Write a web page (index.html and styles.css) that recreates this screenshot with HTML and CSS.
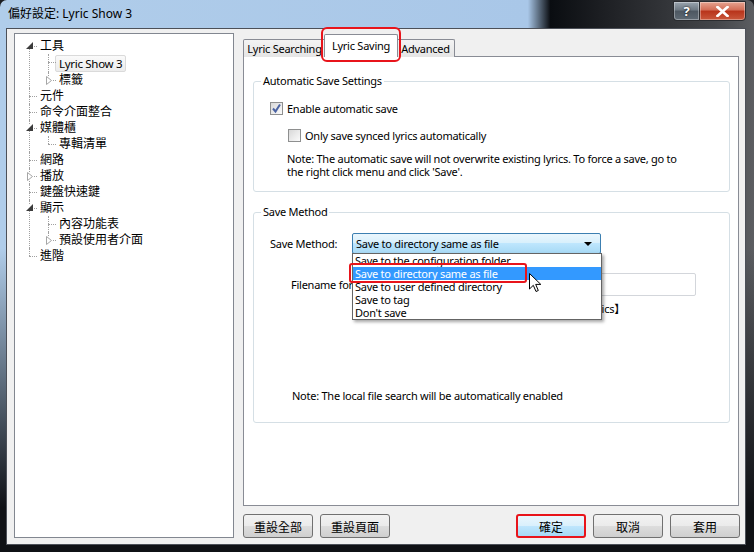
FILE: index.html
```html
<!DOCTYPE html>
<html lang="zh-TW">
<head>
  <meta charset="UTF-8">
  <title>偏好設定: Lyric Show 3</title>
  <link rel="stylesheet" href="styles.css">
</head>
<body>

  <div class="window">

    <!-- Barra de título -->
    <div class="titlebar">
      <span class="title">偏好設定: Lyric Show 3</span>
      <div class="caption-buttons">
        <span class="cap-btn help">?</span>
        <span class="cap-btn close">
          <svg width="13" height="11" viewBox="0 0 13 11"><path d="M1.5 1 L11.5 10 M11.5 1 L1.5 10" stroke="#fff" stroke-width="2.6" stroke-linecap="square"/></svg>
        </span>
      </div>
    </div>

    <div class="client">

      <!-- Árvore de categorias -->
      <div class="tree">
        <ul class="tree-root">
          <li>
            <span class="exp exp-open"><svg width="7" height="7" viewBox="0 0 7 7"><polygon points="7,0 7,7 0,7" fill="#3c3c3c"/></svg></span>
            <span class="node">工具</span>
            <ul>
              <li><span class="node selected">Lyric Show 3</span></li>
              <li>
                <span class="exp exp-closed"><svg width="6" height="9" viewBox="0 0 6 9"><polygon points="0.5,0.5 5.5,4.5 0.5,8.5" fill="#fff" stroke="#a6a6a6"/></svg></span>
                <span class="node">標籤</span>
              </li>
            </ul>
          </li>
          <li><span class="node">元件</span></li>
          <li><span class="node">命令介面整合</span></li>
          <li>
            <span class="exp exp-open"><svg width="7" height="7" viewBox="0 0 7 7"><polygon points="7,0 7,7 0,7" fill="#3c3c3c"/></svg></span>
            <span class="node">媒體櫃</span>
            <ul>
              <li><span class="node">專輯清單</span></li>
            </ul>
          </li>
          <li><span class="node">網路</span></li>
          <li>
            <span class="exp exp-closed"><svg width="6" height="9" viewBox="0 0 6 9"><polygon points="0.5,0.5 5.5,4.5 0.5,8.5" fill="#fff" stroke="#a6a6a6"/></svg></span>
            <span class="node">播放</span>
          </li>
          <li><span class="node">鍵盤快速鍵</span></li>
          <li>
            <span class="exp exp-open"><svg width="7" height="7" viewBox="0 0 7 7"><polygon points="7,0 7,7 0,7" fill="#3c3c3c"/></svg></span>
            <span class="node">顯示</span>
            <ul>
              <li><span class="node">內容功能表</span></li>
              <li>
                <span class="exp exp-closed"><svg width="6" height="9" viewBox="0 0 6 9"><polygon points="0.5,0.5 5.5,4.5 0.5,8.5" fill="#fff" stroke="#a6a6a6"/></svg></span>
                <span class="node">預設使用者介面</span>
              </li>
            </ul>
          </li>
          <li><span class="node">進階</span></li>
        </ul>
      </div>

      <!-- Área principal -->
      <div class="main">

        <div class="tabs">
          <span class="tab tab-search">Lyric Searching</span>
          <span class="tab tab-active">Lyric Saving</span>
          <span class="tab tab-advanced">Advanced</span>
        </div>

        <div class="panel">

          <fieldset class="group group-auto">
            <legend>Automatic Save Settings</legend>
            <label class="check-row">
              <span class="checkbox"><svg width="11" height="11" viewBox="0 0 11 11"><path d="M2 5.5 L4.5 8.5 L9 1.5" fill="none" stroke="#4b63a3" stroke-width="2"/></svg></span>
              Enable automatic save
            </label>
            <label class="check-row sub">
              <span class="checkbox"></span>
              Only save synced lyrics automatically
            </label>
            <p class="note">Note: The automatic save will not overwrite existing lyrics. To force a save, go to<br>the right click menu and click 'Save'.</p>
          </fieldset>

          <fieldset class="group group-method">
            <legend>Save Method</legend>

            <div class="form-row">
              <span class="label label-method">Save Method:</span>
              <div class="combo-wrap">
                <div class="combo">
                  <span>Save to directory same as file</span>
                  <svg width="8" height="4" viewBox="0 0 8 4"><polygon points="0,0 8,0 4,4" fill="#000"/></svg>
                </div>
                <!-- Lista aberta do combo -->
                <ul class="dropdown">
                  <li>Save to the configuration folder</li>
                  <li class="hl">Save to directory same as file</li>
                  <li>Save to user defined directory</li>
                  <li>Save to tag</li>
                  <li>Don't save</li>
                </ul>
                <svg class="cursor" width="13" height="20" viewBox="0 0 13 20"><path d="M0.5 0.5 L0.5 16 L4.3 12.3 L7 18.5 L9.3 17.5 L6.7 11.4 L11.8 11.4 Z" fill="#fff" stroke="#000" stroke-width="1"/></svg>
              </div>
            </div>

            <div class="form-row filename-row">
              <span class="label label-file">Filename format:</span>
              <span class="input"></span>
            </div>
            <div class="sample">%artist% - %title%【Synced Lyrics】</div>

            <p class="note note-local">Note: The local file search will be automatically enabled</p>
          </fieldset>

        </div>

        <!-- Botões inferiores -->
        <div class="buttons">
          <div class="btn-group">
            <button class="btn">重設全部</button>
            <button class="btn">重設頁面</button>
          </div>
          <div class="btn-group">
            <button class="btn btn-ok">確定</button>
            <button class="btn">取消</button>
            <button class="btn">套用</button>
          </div>
        </div>

      </div>
    </div>
  </div>

</body>
</html>
```

FILE: styles.css
```css
body {
  margin: 0;
  background: #1b1d21;
  font-family: "Noto Sans", "Noto Sans CJK TC", sans-serif;
  font-size: 11px;
  letter-spacing: -0.25px;
  color: #000;
}

/* Janela com moldura Aero */
.window {
  width: 754px;
  height: 552px;
  box-sizing: border-box;
  padding: 0 8px 7px 6px;
  display: flex;
  flex-direction: column;
  border-radius: 7px 7px 0 0;
  background:
    linear-gradient(180deg, rgba(0,0,0,0) 0, rgba(0,0,0,0) 45%, #0f1115 92%),
    linear-gradient(90deg, #b0cdea 0, #a9c7e8 70%, #0a0d11 73%, #1d1f23 80%, #44464a 95%, #5c5e62 100%);
}

.titlebar {
  height: 28px;
  display: flex;
  justify-content: space-between;
  align-items: flex-start;
}

.title {
  margin: 6px 0 0 2px;
  font-size: 12px;
  line-height: 16px;
  letter-spacing: 0;
}

.caption-buttons {
  display: flex;
  margin-top: 1px;
}

.cap-btn {
  height: 18px;
  display: flex;
  align-items: center;
  justify-content: center;
  border: 1px solid #2a2c30;
  box-shadow: inset 0 0 0 1px rgba(255,255,255,0.35);
  color: #fff;
  font-weight: bold;
  font-size: 13px;
}

.help {
  width: 25px;
  border-radius: 0 0 0 4px;
  border-right: none;
  background: linear-gradient(#9aa5af 0, #6d7882 45%, #4d5761 50%, #5f6a74 100%);
  text-shadow: 0 0 2px #000;
}

.close {
  width: 45px;
  border-radius: 0 0 4px 0;
  background: linear-gradient(#e6a491 0, #d26c55 45%, #b8331a 50%, #c9583c 100%);
}

.client {
  flex: 1;
  display: flex;
  gap: 9px;
  padding: 4px 6px 6px 7px;
  background: #f0f0f0;
  border: 1px solid #4c5058;
}

/* Árvore */
.tree {
  width: 218px;
  background: #fff;
  border: 1px solid #828790;
  padding-top: 4px;
  font-size: 12px;
  letter-spacing: 0;
}

.tree ul {
  list-style: none;
  margin: 0;
  padding: 0 0 0 8px;
}

.tree .tree-root {
  padding-left: 14px;
}

.tree li {
  position: relative;
  padding-left: 11px;
}

.tree li::before {
  content: "";
  position: absolute;
  left: 0;
  top: 8px;
  width: 8px;
  border-top: 1px dotted #a0a0a0;
}

.tree li::after {
  content: "";
  position: absolute;
  left: 0;
  top: 0;
  bottom: 0;
  border-left: 1px dotted #a0a0a0;
}

.tree-root > li:first-child::after {
  top: 8px;
}

.tree li:last-child::after {
  bottom: auto;
  height: 8px;
}

.node {
  display: block;
  height: 16px;
  line-height: 16px;
  white-space: nowrap;
}

.node.selected {
  display: inline-block;
  margin: 1px 0 0 -4px;
  padding: 0 3px;
  border: 1px solid #dadada;
  border-radius: 2px;
  background: linear-gradient(#fafafa, #ececec);
  height: 15px;
  line-height: 15px;
  font-size: 11.5px;
  letter-spacing: -0.3px;
}

.exp {
  position: absolute;
  z-index: 1;
  background: #fff;
  display: flex;
}

.exp-open {
  left: -3px;
  top: 4px;
}

.exp-closed {
  left: -2px;
  top: 4px;
}

/* Área principal */
.main {
  flex: 1;
  display: flex;
  flex-direction: column;
  padding-top: 2px;
}

.tabs {
  height: 22px;
  display: flex;
  align-items: flex-end;
  position: relative;
  z-index: 1;
  margin-bottom: -1px;
}

.tab {
  box-sizing: border-box;
  height: 18px;
  line-height: 17px;
  text-align: center;
  border: 1px solid #898c95;
  border-bottom: none;
  background: linear-gradient(#f3f3f3, #e5e5e5);
  border-radius: 2px 2px 0 0;
  white-space: nowrap;
}

.tab-search {
  width: 83px;
}

.tab-advanced {
  width: 59px;
}

.tab-active {
  position: relative;
  z-index: 2;
  width: 74px;
  height: 23px;
  line-height: 21px;
  margin: 0 -2px;
  background: #fff;
}

/* Destaque vermelho da aba */
.tab-active::after {
  content: "";
  position: absolute;
  left: -4px;
  right: -4px;
  top: -8px;
  bottom: -5px;
  border: 2px solid #e8141b;
  border-radius: 6px;
}

.panel {
  flex: 1;
  background: #fff;
  border: 1px solid #898c95;
  padding: 17px 8px 0 9px;
}

.group {
  box-sizing: border-box;
  margin: 0;
  border: 1px solid #d5dfe5;
  border-radius: 3px;
  padding: 0 0 0 16px;
}

.group legend {
  padding: 0 2px;
  margin-left: -9px;
  line-height: 14px;
}

.group-auto {
  height: 118px;
  padding-top: 12px;
}

.check-row {
  display: flex;
  align-items: center;
  gap: 4px;
  height: 16px;
}

.check-row.sub {
  margin: 11px 0 0 18px;
}

.checkbox {
  width: 11px;
  height: 11px;
  border: 1px solid #8e8f8f;
  background: linear-gradient(135deg, #d8d8d8, #fbfbfb);
  display: flex;
}

.note {
  margin: 9px 0 0 17px;
  line-height: 13px;
}

.group-method {
  margin-top: 13px;
  height: 218px;
  padding-top: 14px;
}

.form-row {
  display: flex;
  align-items: center;
}

.label {
  white-space: nowrap;
}

.label-method {
  width: 82px;
}

.combo-wrap {
  position: relative;
}

.combo {
  box-sizing: border-box;
  width: 249px;
  height: 21px;
  border: 1px solid #3c7fb1;
  border-radius: 2px;
  background: linear-gradient(#eaf6fd 0, #d9f0fc 45%, #bee6fd 50%, #a7d9f5 100%);
  display: flex;
  align-items: center;
  justify-content: space-between;
  padding: 0 8px 0 3px;
}

/* Lista aberta sobre o formulário */
.dropdown {
  position: absolute;
  z-index: 3;
  top: 20px;
  left: 0;
  box-sizing: border-box;
  width: 250px;
  margin: 0;
  padding: 0;
  list-style: none;
  background: #fff;
  border: 1px solid #646464;
  box-shadow: 2px 2px 3px rgba(0,0,0,0.35);
}

.dropdown li {
  height: 13px;
  line-height: 13px;
  padding-left: 2px;
  white-space: nowrap;
}

.dropdown li.hl {
  position: relative;
  background: #3399ff;
  color: #fff;
}

.dropdown li.hl::after {
  content: "";
  position: absolute;
  left: -4px;
  top: -4px;
  width: 174px;
  height: 16px;
  border: 2px solid #e8141b;
  border-radius: 3px;
}

.cursor {
  position: absolute;
  z-index: 4;
  left: 177px;
  top: 40px;
}

.filename-row {
  margin: 19px 0 0 21px;
}

.label-file {
  width: 84px;
}

.input {
  box-sizing: border-box;
  width: 321px;
  height: 23px;
  border: 1px solid #d3d6db;
  border-radius: 2px;
}

.sample {
  width: 355px;
  margin-top: 6px;
  text-align: right;
  line-height: 14px;
  white-space: nowrap;
}

.note-local {
  margin: 73px 0 0 22px;
}

/* Botões */
.buttons {
  display: flex;
  justify-content: space-between;
  margin-top: 8px;
  margin-right: -1px;
}

.btn-group {
  display: flex;
  gap: 7px;
}

.btn {
  width: 70px;
  height: 24px;
  border: 1px solid #707070;
  border-radius: 3px;
  background: linear-gradient(#f2f2f2 0, #ebebeb 50%, #dddddd 51%, #cfcfcf 100%);
  font-family: "Noto Sans CJK TC", sans-serif;
  font-size: 12px;
  letter-spacing: 0;
  padding: 0;
  color: #000;
}

.btn-ok {
  border: 2px solid #e8141b;
  background: linear-gradient(#eaf6fd 0, #d9f0fc 50%, #bee6fd 51%, #a7d9f5 100%);
}
```
